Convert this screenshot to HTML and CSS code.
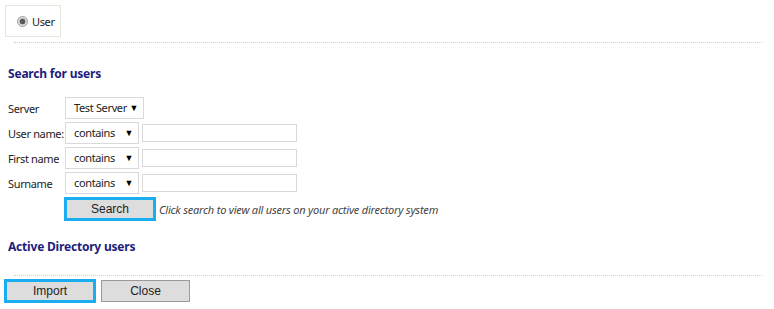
FILE: index.html
```html
<!DOCTYPE html>
<html lang="en">
<head>
  <meta charset="UTF-8" />
  <title>Import users</title>
  <link rel="stylesheet" href="styles.css">
</head>
<body>
  <div class="scope">
    <label class="radio"><span class="dot"></span>User</label>
  </div>
  <hr class="sep sep-top">

  <h3 class="title">Search for users</h3>
  <div class="form">
    <label class="lbl">Server</label>
    <span class="sel sel-server">Test Server</span>
    <span></span>

    <label class="lbl">User name:</label>
    <span class="sel">contains</span>
    <input class="txt" type="text">

    <label class="lbl">First name</label>
    <span class="sel">contains</span>
    <input class="txt" type="text">

    <label class="lbl">Surname</label>
    <span class="sel">contains</span>
    <input class="txt" type="text">
  </div>
  <div class="search-row">
    <button class="btn btn-focus btn-search">Search</button>
    <span class="hint">Click search to view all users on your active directory system</span>
  </div>

  <h3 class="title title-ad">Active Directory users</h3>
  <hr class="sep sep-bottom">

  <div class="actions">
    <button class="btn btn-focus btn-import">Import</button>
    <button class="btn btn-close">Close</button>
  </div>
</body>
</html>
```

FILE: styles.css
```css
body {
  margin: 0;
  font-family: "Noto Sans", sans-serif;
  font-size: 11px;
  letter-spacing: -0.35px;
  color: #222;
  background: #fff;
}
.scope {
  display: flex;
  align-items: center;
  box-sizing: border-box;
  width: 56px;
  height: 32px;
  margin: 5px 0 0 5px;
  padding-left: 11px;
  border: 1px solid #e6e6dc;
}
.radio {
  display: flex;
  align-items: center;
  color: #222;
}
.dot {
  width: 9px;
  height: 9px;
  margin-right: 4px;
  border: 1px solid #a0a0a0;
  border-radius: 50%;
  background: radial-gradient(circle, #5a5a5a 0 2.6px, #d8d8d8 3.2px);
}
.sep {
  height: 0;
  border: 0;
  border-top: 1px dotted #cfcfcf;
}
.sep-top {
  margin: 5px 12px 0 14px;
}
.sep-bottom {
  margin: 20px 12px 0 14px;
}
.title {
  margin: 22px 0 0 8px;
  font-size: 12px;
  font-weight: bold;
  letter-spacing: -0.2px;
  color: #1d1d7c;
}
.title-ad {
  margin-top: 17px;
}
.form {
  display: grid;
  grid-template-columns: 57px 77px 155px;
  grid-auto-rows: 22px;
  row-gap: 3px;
  margin: 15px 0 0 8px;
  align-items: center;
}
.lbl {
  white-space: nowrap;
  color: #222;
}
.sel {
  position: relative;
  box-sizing: border-box;
  height: 22px;
  width: 74px;
  padding-left: 8px;
  line-height: 20px;
  white-space: nowrap;
  border: 1px solid #d9d9d9;
  color: #222;
}
.sel::after {
  content: "\25BC";
  position: absolute;
  right: 5px;
  top: 0;
  font-size: 9px;
  color: #000;
}
.sel-server {
  width: 79px;
}
.txt {
  box-sizing: border-box;
  width: 155px;
  height: 18px;
  margin: 0;
  border: 1px solid #d9d9d9;
}
.search-row {
  display: flex;
  align-items: center;
  margin: 3px 0 0 64px;
}
.hint {
  margin-left: 3px;
  font-style: italic;
  font-size: 11px;
  letter-spacing: -0.2px;
  color: #444;
}
.btn {
  box-sizing: border-box;
  height: 24px;
  padding: 0;
  font-family: "Liberation Sans", Arial, sans-serif;
  font-size: 12px;
  letter-spacing: 0;
  color: #222;
  background: #dddddd;
  border: 1px solid #9a9a9a;
}
.btn-focus {
  border: 3px solid #1aaef0;
}
.btn-search {
  width: 92px;
}
.actions {
  display: flex;
  align-items: center;
  gap: 5px;
  margin: 3px 0 0 4px;
}
.btn-import {
  width: 92px;
}
.btn-close {
  width: 89px;
  height: 22px;
}
```
